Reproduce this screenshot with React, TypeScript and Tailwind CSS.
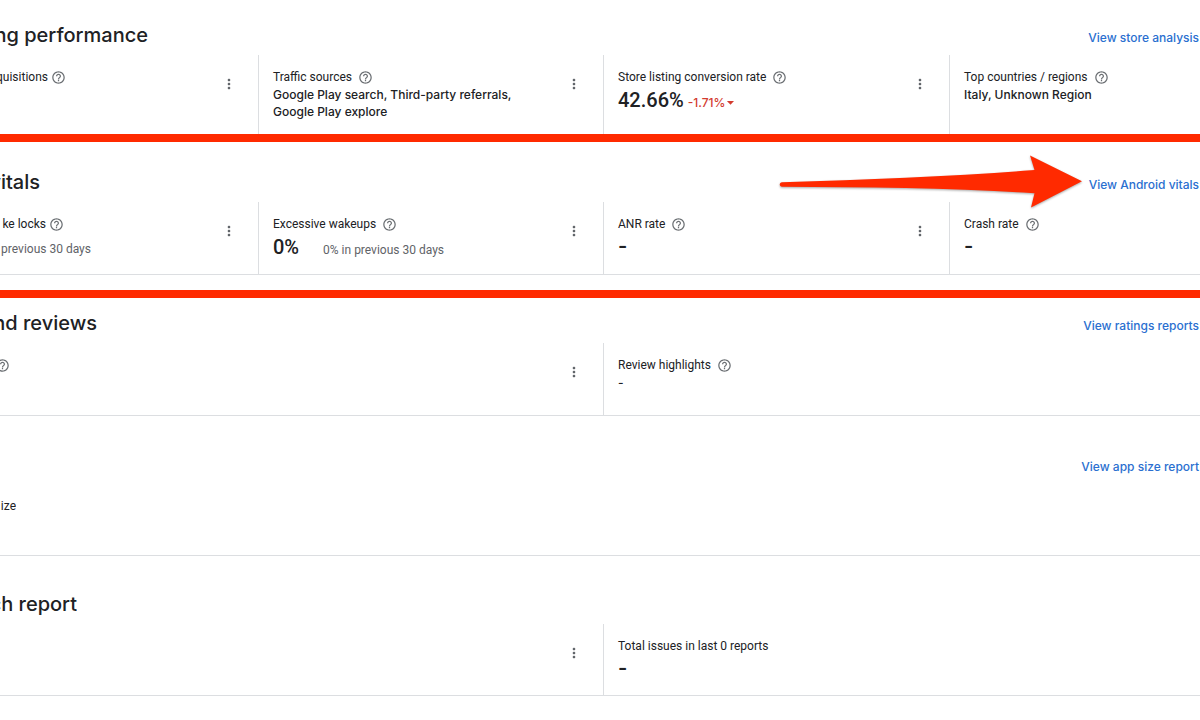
import type { ReactNode } from "react";
import { MdArrowDropDown, MdHelpOutline, MdMoreVert } from "react-icons/md";

const fourColumns = "grid grid-cols-[259fr_345fr_346fr_250fr]";
const twoColumns = "grid grid-cols-[604fr_596fr]";

function Help({ topic }: { topic: string }) {
  return (
    <button type="button" aria-label={`Help: ${topic}`} className="shrink-0 text-[#6b6f73]">
      <MdHelpOutline size={15} />
    </button>
  );
}

// Text that runs off the left edge of the viewport; `className` sets where it ends.
function Clipped({ className, children }: { className: string; children: ReactNode }) {
  return <span className={`flex justify-end overflow-hidden whitespace-nowrap ${className}`}>{children}</span>;
}

function Header({ title, titleWidth, link, first }: { title?: string; titleWidth?: string; link?: string; first?: boolean }) {
  return (
    <header className={`flex items-end justify-between ${first ? "h-[55px]" : "h-[68px]"}`}>
      <h2 className="pb-2 font-['Inter'] text-[20px] leading-6 font-medium text-[#202124]">
        {title && <Clipped className={titleWidth ?? ""}>{title}</Clipped>}
      </h2>
      {link && (
        <a href="#" className="pr-px pb-2 font-['Inter'] text-[12px] leading-[19px] font-medium whitespace-nowrap text-[#2a6fd0]">
          {link}
        </a>
      )}
    </header>
  );
}

interface CellProps {
  label?: string;
  labelWidth?: string;
  help?: boolean;
  menu?: boolean;
  divider?: boolean;
  children?: ReactNode;
}

function Cell({ label, labelWidth, help, menu, divider, children }: CellProps) {
  return (
    <div className={`flex min-w-0 items-start justify-between ${divider ? "border-r border-[#dcdee1]" : ""}`}>
      <div className={`min-w-0 pt-[14px] ${labelWidth ? "" : "pl-[14px]"}`}>
        <div className={`flex h-[17px] items-center whitespace-nowrap ${labelWidth ? "gap-[3px]" : "gap-[6px]"}`}>
          {labelWidth ? <Clipped className={labelWidth}>{label}</Clipped> : label}
          {help && <Help topic={label || "Rating"} />}
        </div>
        {children}
      </div>
      {menu && (
        <button type="button" aria-label="More options" className="mt-[21px] mr-[21px] shrink-0 text-[#5f6368]">
          <MdMoreVert size={16} />
        </button>
      )}
    </div>
  );
}

function Big({ children }: { children: ReactNode }) {
  return <strong className="font-['Roboto'] text-[20px] leading-7 font-medium">{children}</strong>;
}

function Dash() {
  return <strong className="font-['Inter'] text-[20px] leading-[26px] font-semibold">-</strong>;
}

function Note({ children }: { children: ReactNode }) {
  return <p className="font-['Inter'] text-[12px] leading-[17px] font-medium">{children}</p>;
}

export default function App() {
  return (
    <main className="min-h-screen overflow-hidden bg-white font-['Roboto',sans-serif] text-[12px] leading-[17px] text-[#202124]">
      <section>
        <Header first title="ng performance" titleWidth="w-[148px]" link="View store analysis" />
        <div className={`${fourColumns} min-h-[79px]`}>
          <Cell label="quisitions" labelWidth="w-[48px]" help menu divider />
          <Cell label="Traffic sources" help menu divider>
            <Note>
              Google Play search, Third-party referrals,
              <br />
              Google Play explore
            </Note>
          </Cell>
          <Cell label="Store listing conversion rate" help menu divider>
            <p className="flex items-baseline gap-1">
              <Big>42.66%</Big>
              <span className="flex items-center font-['Inter'] text-[12px] font-medium text-[#d33b2f]">
                -1.71%
                <MdArrowDropDown size={17} className="-ml-[3px]" />
              </span>
            </p>
          </Cell>
          <Cell label="Top countries / regions" help>
            <Note>Italy, Unknown Region</Note>
          </Cell>
        </div>
      </section>

      <section className="relative">
        <Header title="vitals" titleWidth="w-[40px]" link="View Android vitals" />
        <div className={`${fourColumns} min-h-[73px] border-b border-[#dcdee1]`}>
          <Cell label="ke locks" labelWidth="w-[46px]" help menu divider>
            <p className="pt-[8px] text-[#5f6368]">
              <Clipped className="w-[91px]">previous 30 days</Clipped>
            </p>
          </Cell>
          <Cell label="Excessive wakeups" help menu divider>
            <p className="flex items-baseline gap-6">
              <Big>0%</Big>
              <span className="text-[#5f6368]">0% in previous 30 days</span>
            </p>
          </Cell>
          <Cell label="ANR rate" help menu divider>
            <Dash />
          </Cell>
          <Cell label="Crash rate" help>
            <Dash />
          </Cell>
        </div>
        <div className="pointer-events-none absolute inset-x-0 top-0 -bottom-[23px] border-y-8 border-[#ff2a00]" />
        <svg
          aria-hidden="true"
          viewBox="0 0 306 56"
          className="pointer-events-none absolute top-[20px] right-[115px] h-[56px] w-[306px] drop-shadow-[0_1px_1px_rgba(0,0,0,0.35)]"
        >
          <path d="M3 28.2 C90 25.5 180 22 255.500 16 L251 1.500 L303 27.200 L252 53.500 L255.500 39.200 C180 34.500 90 33 3 32.800 C0 32.600 0 28.400 3 28.200Z" fill="#ff2a00" />
        </svg>
      </section>

      <section>
        <Header title="nd reviews" titleWidth="w-[97px]" link="View ratings reports" />
        <div className={`${twoColumns} min-h-[73px] border-b border-[#dcdee1]`}>
          <div className="-ml-[8px] grid">
            <Cell labelWidth="w-0" help menu divider />
          </div>
          <Cell label="Review highlights" help>
            <Note>-</Note>
          </Cell>
        </div>
      </section>

      <section>
        <Header link="View app size report" />
        <div className="min-h-[72px] border-b border-[#dcdee1]">
          <Cell label="ize" labelWidth="w-[16px]" />
        </div>
      </section>

      <section>
        <Header title="ch report" titleWidth="w-[77px]" />
        <div className={`${twoColumns} min-h-[72px] border-b border-[#dcdee1]`}>
          <Cell menu divider />
          <Cell label="Total issues in last 0 reports">
            <Dash />
          </Cell>
        </div>
      </section>
    </main>
  );
}
